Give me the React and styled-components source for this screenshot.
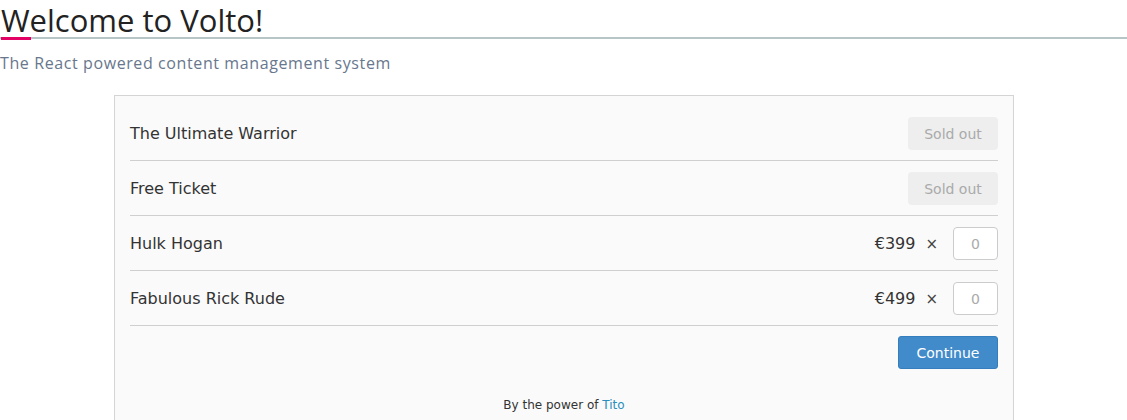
import React from 'react';
import styled, { createGlobalStyle } from 'styled-components';

const GlobalStyle = createGlobalStyle`
  html, body {
    margin: 0;
    padding: 0;
    background: #fff;
  }
  body {
    font-family: 'DejaVu Sans', sans-serif;
  }
`;

const Page = styled.div`
  width: 1127px;
  height: 420px;
  overflow: hidden;
`;

const Title = styled.h1`
  margin: 0;
  padding: 4px 0 0 1px;
  font-family: 'Open Sans', 'Lato', sans-serif;
  font-weight: 500;
  font-size: 31px;
  line-height: 33px;
  color: #222;
  letter-spacing: 0;
  position: relative;
  border-bottom: 2px solid #b8c5c7;
  &::after {
    content: '';
    position: absolute;
    left: 1px;
    bottom: -3px;
    width: 30px;
    height: 3px;
    background: #e40166;
  }
`;

const Lead = styled.p`
  margin: 13px 0 0;
  font-family: 'Open Sans', 'Lato', sans-serif;
  font-size: 16px;
  line-height: 22px;
  letter-spacing: 0.6px;
  color: #68778d;
`;

const Widget = styled.div`
  margin: 21px 0 0 114px;
  width: 900px;
  box-sizing: border-box;
  background: #fafafa;
  border: 1px solid #d4d4d4;
  padding: 10px 15px 0;
  color: #333;
  font-size: 16px;
`;

const Row = styled.div`
  display: flex;
  align-items: center;
  justify-content: space-between;
  padding: 11px 0 10px;
  height: 33px;
  border-bottom: 1px solid #cfcfcf;
`;

const Name = styled.span`
  font-size: 16px;
  color: #333;
`;

const Right = styled.div`
  display: flex;
  align-items: center;
`;

const SoldOut = styled.span`
  display: flex;
  align-items: center;
  justify-content: center;
  width: 90px;
  height: 33px;
  border-radius: 4px;
  background: #eeeeee;
  color: #aaa;
  font-size: 14px;
`;

const Price = styled.span`
  font-size: 16px;
  color: #333;
`;

const Times = styled.span`
  margin: 0 15px 0 10px;
  font-size: 15px;
  color: #444;
`;

const Qty = styled.input`
  box-sizing: border-box;
  width: 45px;
  height: 33px;
  border: 1px solid #cccccc;
  border-radius: 4px;
  background: #fff;
  text-align: center;
  font-family: 'DejaVu Sans', sans-serif;
  font-size: 14px;
  color: #999;
  padding: 0;
  &::placeholder {
    color: #aaa;
  }
`;

const Actions = styled.div`
  display: flex;
  justify-content: flex-end;
  padding: 10px 0 0;
`;

const Button = styled.button`
  width: 100px;
  height: 33px;
  border: 1px solid #357ebd;
  border-radius: 3px;
  background: #428bca;
  color: #fff;
  font-family: 'DejaVu Sans', sans-serif;
  font-size: 14px;
  padding: 0;
`;

const Footer = styled.div`
  padding: 29px 0 20px;
  text-align: center;
  font-size: 12px;
  color: #333;
  a {
    color: #2a8fbd;
    text-decoration: none;
  }
`;

const tickets = [
  { name: 'The Ultimate Warrior', soldOut: true },
  { name: 'Free Ticket', soldOut: true },
  { name: 'Hulk Hogan', price: '€399' },
  { name: 'Fabulous Rick Rude', price: '€499' },
];

export default function App() {
  return (
    <Page>
      <GlobalStyle />
      <Title>Welcome to Volto!</Title>
      <Lead>The React powered content management system</Lead>
      <Widget>
        {tickets.map((t) => (
          <Row key={t.name}>
            <Name>{t.name}</Name>
            <Right>
              {t.soldOut ? (
                <SoldOut>Sold out</SoldOut>
              ) : (
                <>
                  <Price>{t.price}</Price>
                  <Times>×</Times>
                  <Qty placeholder="0" />
                </>
              )}
            </Right>
          </Row>
        ))}
        <Actions>
          <Button>Continue</Button>
        </Actions>
        <Footer>
          By the power of <a href="#">Tito</a>
        </Footer>
      </Widget>
    </Page>
  );
}
